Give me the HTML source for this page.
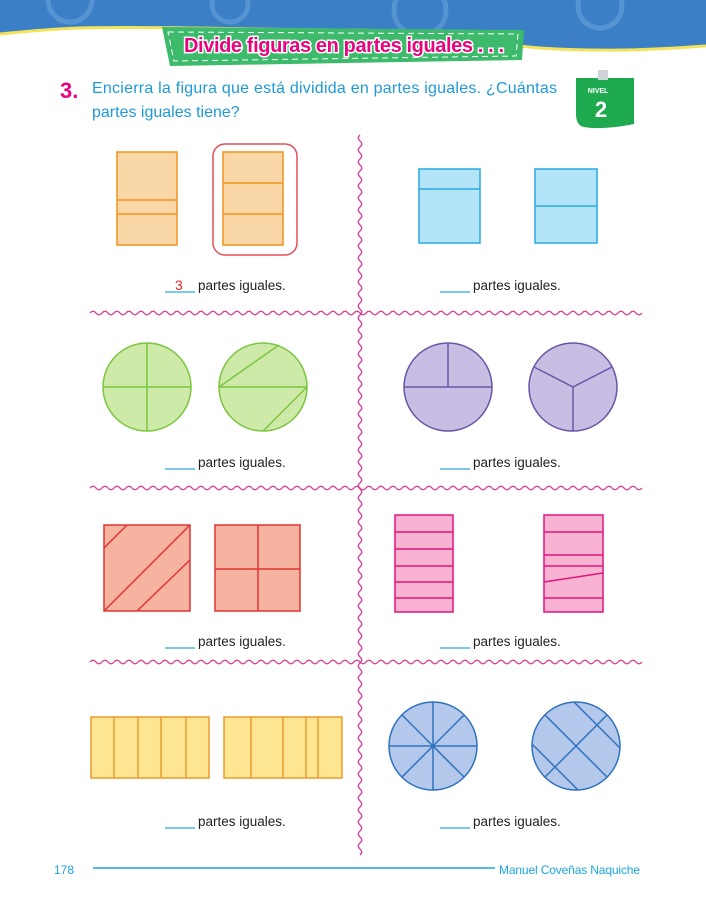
<!DOCTYPE html>
<html><head><meta charset="utf-8"><style>
html,body{margin:0;padding:0;background:#fff;width:706px;height:900px;overflow:hidden}
svg{display:block}
text{font-family:"Liberation Sans",sans-serif}
</style></head><body>
<svg id="s" width="706" height="900" viewBox="0 0 706 900" xmlns="http://www.w3.org/2000/svg">
<defs>
<clipPath id="c1"><circle cx="576" cy="746" r="44"/></clipPath>
</defs>
<!-- header -->
<path d="M0 0H706V46C650 50 600 52 540 48C470 42 420 30 350 30C260 30 150 26 80 28C50 29 20 32 0 34Z" fill="#3b7fc6"/>
<path d="M0 34C20 32 50 29 80 28C150 26 260 30 350 30C420 30 470 42 540 48C600 52 650 50 706 46" fill="none" stroke="#f2e35a" stroke-width="3"/>
<g fill="none" stroke="#5d98d4" stroke-width="5" opacity=".8">
<circle cx="70" cy="0" r="22"/><circle cx="230" cy="4" r="18"/><circle cx="420" cy="10" r="26"/><circle cx="600" cy="6" r="22"/>
</g>
<polygon points="162,27 524,30 522,60 170,66" fill="#3dba6c"/>
<polygon points="168,32 518,34 516,56 174,61" fill="none" stroke="#fff" stroke-width="1" stroke-dasharray="6,4"/>
<text x="344" y="52" text-anchor="middle" font-size="20" font-weight="bold" fill="#e6057f" stroke="#fff" stroke-width="3" paint-order="stroke" textLength="320">Divide figuras en partes iguales . . .</text>
<!-- question -->
<text x="60" y="98" font-size="22" font-weight="bold" fill="#e6057f">3.</text>
<text font-size="16" fill="#1d9ad8"><tspan x="92" y="93" textLength="465" lengthAdjust="spacing">Encierra la figura que está dividida en partes iguales. ¿Cuántas</tspan><tspan x="92" y="117">partes iguales tiene?</tspan></text>
<!-- nivel -->
<path d="M576 78H634V124C625 126 600 130 584 127C578 126 576 120 576 114Z" fill="#1faa4f"/>
<rect x="598" y="70" width="10" height="10" fill="#cfd4d6"/>
<text x="598" y="93" text-anchor="middle" font-size="7" font-weight="bold" fill="#fff" font-family="Liberation Serif">NIVEL</text>
<text x="601" y="117" text-anchor="middle" font-size="22" font-weight="bold" fill="#fff">2</text>
<!-- dividers -->
<g id="waves" fill="none" stroke="#d83b8f" stroke-width="1.3"></g>
<!-- row1 -->
<g fill="#fad7a6" stroke="#f2931c" stroke-width="1.5">
<rect x="117" y="152" width="60" height="93"/><line x1="117" y1="200" x2="177" y2="200"/><line x1="117" y1="214" x2="177" y2="214"/>
<rect x="223" y="152" width="60" height="93"/><line x1="223" y1="183" x2="283" y2="183"/><line x1="223" y1="214" x2="283" y2="214"/>
</g>
<rect x="213" y="144" width="84" height="111" rx="12" fill="none" stroke="#e0505a" stroke-width="1.5"/>
<g fill="#b4e4f8" stroke="#2aa9df" stroke-width="1.5">
<rect x="419" y="169" width="61" height="74"/><line x1="419" y1="189" x2="480" y2="189"/>
<rect x="535" y="169" width="62" height="74"/><line x1="535" y1="206" x2="597" y2="206"/>
</g>
<!-- row2 -->
<g fill="#cdeaa8" stroke="#7cc540" stroke-width="1.5">
<circle cx="147" cy="387" r="44"/><line x1="103" y1="387" x2="191" y2="387"/><line x1="147" y1="343" x2="147" y2="431"/>
<circle cx="263" cy="387" r="44"/><line x1="219" y1="387" x2="307" y2="387"/><line x1="219" y1="387" x2="279" y2="345"/><line x1="307" y1="387" x2="263" y2="431"/>
</g>
<g fill="#c8bde3" stroke="#6a56a8" stroke-width="1.5">
<circle cx="448" cy="387" r="44"/><line x1="404" y1="387" x2="492" y2="387"/><line x1="448" y1="343" x2="448" y2="387"/>
<circle cx="573" cy="387" r="44"/><line x1="573" y1="387" x2="534" y2="367"/><line x1="573" y1="387" x2="612" y2="367"/><line x1="573" y1="387" x2="573" y2="431"/>
</g>
<!-- row3 -->
<g fill="#f6b39f" stroke="#e03434" stroke-width="1.5">
<rect x="104" y="525" width="86" height="86"/><line x1="104" y1="548" x2="127" y2="525"/><line x1="104" y1="611" x2="190" y2="525"/><line x1="137" y1="611" x2="190" y2="560"/>
<rect x="215" y="525" width="85" height="86"/><line x1="258" y1="525" x2="258" y2="611"/><line x1="215" y1="569" x2="300" y2="569"/>
</g>
<g fill="#f7b3d1" stroke="#e2157e" stroke-width="1.5">
<rect x="395" y="515" width="58" height="97"/>
<line x1="395" y1="532" x2="453" y2="532"/><line x1="395" y1="549" x2="453" y2="549"/><line x1="395" y1="566" x2="453" y2="566"/><line x1="395" y1="582" x2="453" y2="582"/><line x1="395" y1="598" x2="453" y2="598"/>
<rect x="544" y="515" width="59" height="97"/>
<line x1="544" y1="532" x2="603" y2="532"/><line x1="544" y1="555" x2="603" y2="555"/><line x1="544" y1="566" x2="603" y2="566"/><line x1="544" y1="582" x2="603" y2="573"/><line x1="544" y1="598" x2="603" y2="598"/>
</g>
<!-- row4 -->
<g fill="#fde592" stroke="#ec9b2c" stroke-width="1.5">
<rect x="91" y="717" width="118" height="61"/><line x1="114" y1="717" x2="114" y2="778"/><line x1="138" y1="717" x2="138" y2="778"/><line x1="161" y1="717" x2="161" y2="778"/><line x1="186" y1="717" x2="186" y2="778"/>
<rect x="224" y="717" width="118" height="61"/><line x1="251" y1="717" x2="251" y2="778"/><line x1="283" y1="717" x2="283" y2="778"/><line x1="306" y1="717" x2="306" y2="778"/><line x1="318" y1="717" x2="318" y2="778"/>
</g>
<g fill="#b3c8ea" stroke="#2f72be" stroke-width="1.5">
<circle cx="433" cy="746" r="44"/>
<line x1="389" y1="746" x2="477" y2="746"/><line x1="433" y1="702" x2="433" y2="790"/>
<line x1="402" y1="715" x2="464" y2="777"/><line x1="464" y1="715" x2="402" y2="777"/>
<circle cx="576" cy="746" r="44"/>
<g clip-path="url(#c1)">
<line x1="526" y1="796" x2="626" y2="696"/>
<line x1="526" y1="696" x2="626" y2="796"/>
<line x1="547" y1="675" x2="647" y2="775"/>
<line x1="505" y1="717" x2="605" y2="817"/>
</g>
</g>
<!-- labels -->
<g font-size="13.5" fill="#222">
<text x="198" y="290">partes iguales.</text><text x="473" y="290">partes iguales.</text>
<text x="198" y="467">partes iguales.</text><text x="473" y="467">partes iguales.</text>
<text x="198" y="646">partes iguales.</text><text x="473" y="646">partes iguales.</text>
<text x="198" y="826">partes iguales.</text><text x="473" y="826">partes iguales.</text>
</g>
<g stroke="#2aa9df" stroke-width="1.2">
<line x1="165" y1="292" x2="195" y2="292"/><line x1="440" y1="292" x2="470" y2="292"/>
<line x1="165" y1="469" x2="195" y2="469"/><line x1="440" y1="469" x2="470" y2="469"/>
<line x1="165" y1="648" x2="195" y2="648"/><line x1="440" y1="648" x2="470" y2="648"/>
<line x1="165" y1="828" x2="195" y2="828"/><line x1="440" y1="828" x2="470" y2="828"/>
</g>
<text x="175" y="290" font-size="14" fill="#e82424">3</text>
<!-- footer -->
<text x="54" y="874" font-size="12" fill="#1aa7e0">178</text>
<line x1="93" y1="868" x2="495" y2="868" stroke="#1aa7e0" stroke-width="1.5"/>
<text x="499" y="874" font-size="12" fill="#1aa7e0" textLength="141">Manuel Coveñas Naquiche</text>
</svg>
<script>
(function(){
var g=document.getElementById('waves'),ns='http://www.w3.org/2000/svg';
function h(y,x0,x1){var d='M'+x0+' '+y;for(var x=x0;x<x1;x+=12){d+=' q3 -3.5 6 0 q3 3.5 6 0';}return d;}
function v(x,y0,y1){var d='M'+x+' '+y0;for(var y=y0;y<y1;y+=12){d+=' q-3.5 3 0 6 q3.5 3 0 6';}return d;}
var ds=[v(360,135,845),h(313,90,635),h(488,90,635),h(662,90,635)];
ds.forEach(function(d){var p=document.createElementNS(ns,'path');p.setAttribute('d',d);g.appendChild(p);});
})();
</script>
</body></html>
